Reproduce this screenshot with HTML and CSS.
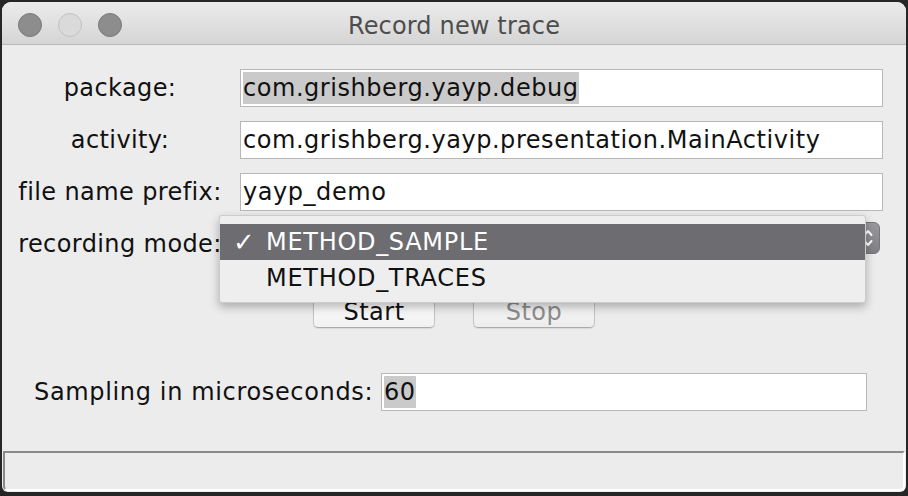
FILE: index.html
```html
<!DOCTYPE html>
<html>
<head>
<meta charset="utf-8">
<link rel="stylesheet" href="styles.css">
</head>
<body>
<div class="window">
  <div class="titlebar">
    <div class="lights">
      <span class="light dark"></span>
      <span class="light"></span>
      <span class="light dark"></span>
    </div>
    <div class="title">Record new trace</div>
    <div></div>
  </div>
  <div class="content">
    <div class="form">
      <div class="row">
        <span class="lbl">package:</span>
        <div class="field"><span class="sel">com.grishberg.yayp.debug</span></div>
      </div>
      <div class="row">
        <span class="lbl">activity:</span>
        <div class="field">com.grishberg.yayp.presentation.MainActivity</div>
      </div>
      <div class="row">
        <span class="lbl">file name prefix:</span>
        <div class="field">yayp_demo</div>
      </div>
      <div class="row row-combo">
        <span class="lbl lbl-combo">recording mode:</span>
        <div class="combo">
          <svg class="arrows" width="10" height="20" viewBox="0 0 10 20"><path d="M1.5 7 L5 3 L8.5 7 M1.5 13 L5 17 L8.5 13" fill="none" stroke="#fff" stroke-width="2" stroke-linecap="round" stroke-linejoin="round"/></svg>
        </div>
      </div>
    </div>
    <div class="buttons">
      <button class="btn">Start</button>
      <button class="btn disabled">Stop</button>
    </div>
    <div class="sampling">
      <span class="lbl-s">Sampling in microseconds:</span>
      <div class="field field-s"><span class="sel">60</span></div>
    </div>
    <div class="popup">
      <div class="item item-sel"><span class="check">✓</span>METHOD_SAMPLE</div>
      <div class="item"><span class="check"></span>METHOD_TRACES</div>
    </div>
  </div>
  <div class="status"></div>
</div>
</body>
</html>
```
FILE: styles.css
```css
* { box-sizing: border-box; }
html, body { margin: 0; }
body {
  background: #262626;
  padding: 2px;
  height: 496px;
  font-family: "DejaVu Sans", sans-serif;
}
.window {
  width: 904px;
  height: 490px;
  background: #ececec;
  border-radius: 9px 9px 6px 6px;
  overflow: hidden;
  display: flex;
  flex-direction: column;
}
.titlebar {
  height: 43px;
  padding-top: 3px;
  border-bottom: 1px solid #b8b8b8;
  background: linear-gradient(#ebebeb, #d5d5d5);
  display: grid;
  grid-template-columns: 1fr auto 1fr;
  align-items: center;
}
.lights {
  display: flex;
  gap: 16px;
  padding-left: 16px;
}
.light {
  width: 24px;
  height: 24px;
  border-radius: 50%;
  background: #dadada;
  border: 1px solid #c2c2c2;
}
.light.dark {
  background: #8d8d8d;
  border-color: #7a7a7a;
}
.title {
  font-size: 24px;
  letter-spacing: 0.15px;
  color: #4d4d4d;
  padding-top: 2px;
}
.content {
  position: relative;
  flex: 1;
  display: flex;
  flex-direction: column;
  padding-top: 24px;
}
.form {
  display: flex;
  flex-direction: column;
  gap: 14px;
  padding: 0 23px 0 6px;
}
.row {
  display: flex;
  align-items: center;
  gap: 8px;
}
.lbl {
  width: 224px;
  flex: none;
  text-align: center;
  font-size: 24px;
  letter-spacing: 0.4px;
  color: #111;
  white-space: nowrap;
}
.field {
  flex: 1;
  height: 38px;
  border: 1px solid #b7b7b7;
  background: #fff;
  display: flex;
  align-items: center;
  padding-left: 2px;
  font-size: 24px;
  letter-spacing: 0.55px;
  color: #111;
  white-space: nowrap;
  overflow: hidden;
}
.sel {
  background: #cacaca;
  line-height: 32px;
}
.row-combo {
  margin-top: -3px;
  align-items: flex-start;
  height: 44px;
}
.lbl-combo {
  line-height: 44px;
}
.combo {
  flex: 1;
  height: 32px;
  margin-right: 3px;
  border-radius: 6px;
  background: linear-gradient(#9a999e, #7f7e84);
  border: 1px solid #767579;
  display: flex;
  justify-content: flex-end;
  align-items: center;
  padding-right: 6px;
}
.buttons {
  display: flex;
  justify-content: center;
  gap: 38px;
  margin-top: 28px;
}
.btn {
  width: 122px;
  height: 34px;
  border: 1px solid #c4c4c4;
  border-bottom-color: #aaaaaa;
  border-radius: 5px;
  background: linear-gradient(#ffffff, #f1f1f1);
  font-family: "DejaVu Sans", sans-serif;
  font-size: 24px;
  letter-spacing: 0.5px;
  color: #111;
  padding: 2px 0 0 0;
  box-shadow: 0 1px 1px rgba(0,0,0,0.08);
}
.btn.disabled {
  color: #8c8c8c;
  background: linear-gradient(#f7f7f7, #ededed);
}
.sampling {
  display: flex;
  align-items: center;
  gap: 8px;
  margin-top: 45px;
  padding-left: 32px;
}
.lbl-s {
  width: 339px;
  flex: none;
  font-size: 24px;
  letter-spacing: 0.65px;
  color: #111;
  white-space: nowrap;
}
.field-s {
  flex: none;
  width: 486px;
}
.popup {
  position: absolute;
  left: 217px;
  top: 170px;
  width: 647px;
  height: 88px;
  background: #eeeeee;
  border: 1px solid rgba(0,0,0,0.14);
  border-radius: 3px;
  box-shadow: 0 4px 10px rgba(0,0,0,0.28);
  padding-top: 8px;
}
.item {
  height: 36px;
  display: flex;
  align-items: center;
  padding-left: 13px;
  font-size: 24px;
  letter-spacing: 0.7px;
  color: #111;
}
.item-sel {
  background: #6d6c71;
  color: #fff;
}
.check {
  width: 33px;
  flex: none;
  font-size: 26px;
  font-weight: bold;
  letter-spacing: 0;
}
.status {
  margin: auto 1px 1px 1px;
  height: 40px;
  flex: none;
  border-top: 2px solid #8a8a8a;
  border-left: 2px solid #8a8a8a;
  border-right: 2px solid #ffffff;
  border-bottom: 2px solid #ffffff;
  background: #ececec;
  border-radius: 0 0 5px 5px;
}
```
